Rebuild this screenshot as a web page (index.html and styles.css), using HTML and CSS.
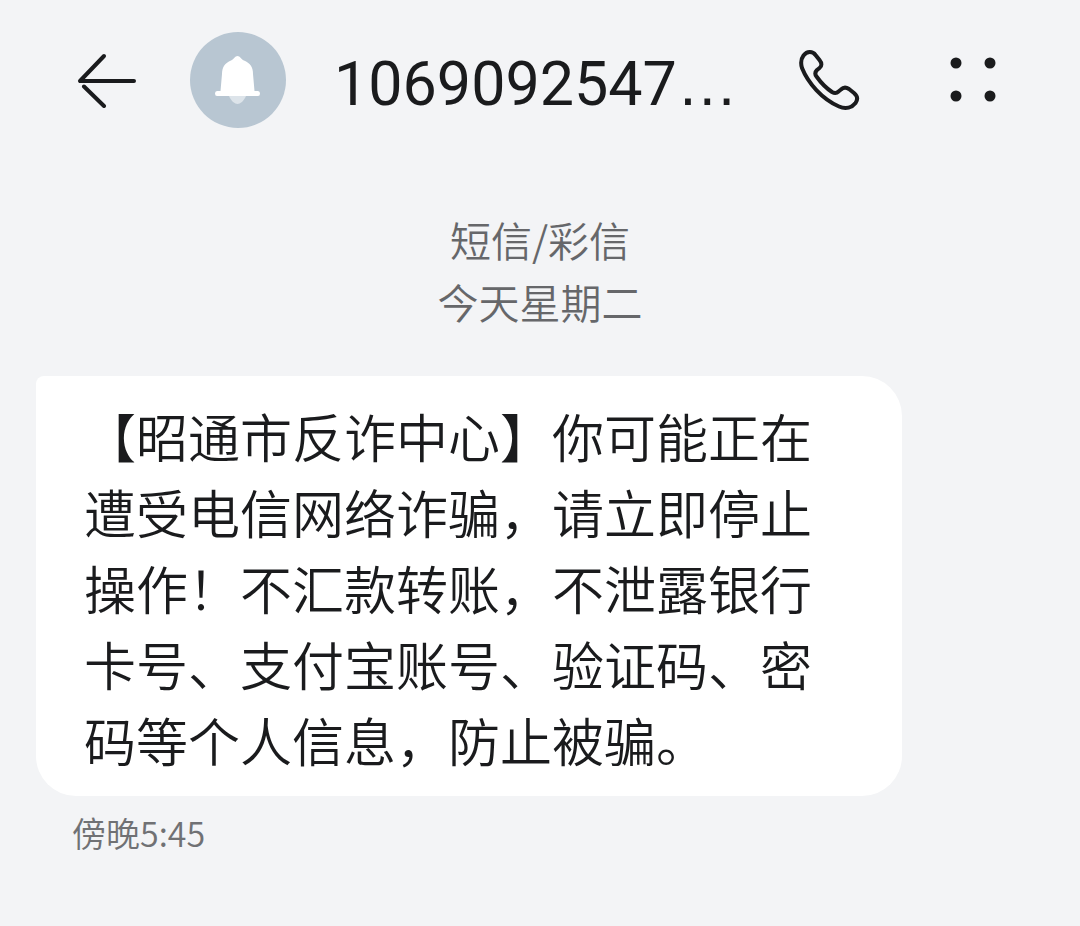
FILE: index.html
```html
<!DOCTYPE html>
<html lang="zh-Hans">
<head>
  <meta charset="UTF-8" />
  <meta name="viewport" content="width=device-width, initial-scale=1.0"/>
  <title>短信</title>
  <link rel="stylesheet" href="styles.css">
</head>
<body>
  <header class="topbar">
    <button type="button" class="icon-btn back" aria-label="返回">
      <svg width="60" height="56" viewBox="0 0 60 56">
        <path d="M28 4 L4 29 H58" />
        <path class="tail" d="M8 34.500 L28 54" />
      </svg>
    </button>

    <div class="avatar">
      <svg width="96" height="96" viewBox="0 0 96 96">
        <path class="clapper" d="M39 64 H56 C54 69 50 72 47.500 72 C45 72 41 69 39 64 Z" />
        <path class="bell" d="M47.500 24 C50 24 51 27 54 28.500 C60 31 63 35 63 42 L64.500 59 H68 Q70 59 70 61.500 Q70 64 68 64 H27 Q25 64 25 61.500 Q25 59 27 59 H30.500 L32 42 C32 35 35 31 41 28.500 C44 27 45 24 47.500 24 Z" />
      </svg>
    </div>

    <h1 class="number">1069092547<span class="more">…</span></h1>

    <button type="button" class="icon-btn call" aria-label="拨打电话">
      <svg width="62" height="62" viewBox="0 0 62 62">
        <path d="M5.500 6.500 C9 2 14.500 2 17.500 6 L21.500 11 C24 14 24 17 21.500 19 L19 21 C17 23 17 25.500 18.500 27.500 C23.500 34.500 28 39 34 43 C36.500 44.500 38.500 44.500 40.500 42.500 L43 40.500 C45.500 38 48 38 51 40 L56 44 C59.500 47 60 50.500 57.500 54 C54 58.500 48 60.500 41 57.500 C24 50 10 34 4 19 C2.500 14 2.500 10.500 5.500 6.500 Z" />
      </svg>
    </button>

    <button type="button" class="icon-btn menu" aria-label="更多">
      <svg width="46" height="46" viewBox="0 0 46 46">
        <circle cx="6" cy="6" r="5.500" />
        <circle cx="40" cy="6" r="5.500" />
        <circle cx="6" cy="39" r="5.500" />
        <circle cx="40" cy="39" r="5.500" />
      </svg>
    </button>
  </header>

  <main class="thread">
    <div class="meta">
      <p>短信/彩信</p>
      <p>今天星期二</p>
    </div>

    <div class="message">
      <p class="bubble">【昭通市反诈中心】你可能正在遭受电信网络诈骗，请立即停止操作！不汇款转账，不泄露银行卡号、支付宝账号、验证码、密码等个人信息，防止被骗。</p>
      <time class="time" datetime="17:45">傍晚5:45</time>
    </div>
  </main>
</body>
</html>
```
FILE: styles.css
```css
* {
  box-sizing: border-box;
}
body {
  margin: 0;
  background: #f3f4f6;
  color: #1a1b1d;
  font-family: "Noto Sans CJK SC", sans-serif;
  font-weight: 350;
}
h1, p {
  margin: 0;
  font-weight: inherit;
}
svg {
  display: block;
  fill: none;
}
.topbar {
  display: flex;
  align-items: center;
  height: 160px;
  padding: 0 84px 0 76px;
}
.icon-btn {
  flex: none;
  padding: 0;
  border: none;
  background: none;
  color: inherit;
  cursor: pointer;
}
.back svg, .call svg {
  stroke: currentColor;
  stroke-width: 4;
  stroke-linecap: round;
  stroke-linejoin: round;
}
.menu {
  margin-left: 90px;
}
.menu svg {
  fill: currentColor;
}
.avatar {
  flex: none;
  margin-left: 54px;
  border-radius: 50%;
  background: #b8c6d2;
}
.bell {
  fill: #fff;
}
.clapper {
  fill: #dde4ea;
}
.number {
  flex: 1;
  margin-left: 48px;
  padding-top: 8px;
  font-family: Roboto, sans-serif;
  font-size: 61px;
  font-weight: 400;
  line-height: 80px;
  white-space: nowrap;
}
.more {
  font-family: "Liberation Sans", sans-serif;
}
.thread {
  padding: 48px 36px;
}
.meta {
  color: #66676a;
  font-size: 41px;
  line-height: 62px;
  text-align: center;
}
.message {
  max-width: 866px;
  margin-top: 44px;
}
.bubble {
  padding: 22px 48px 18px;
  border-radius: 8px 40px 40px 40px;
  background: #fff;
  font-size: 52px;
  line-height: 76px;
}
.time {
  display: block;
  padding: 12px 36px;
  color: #707174;
  font-size: 34px;
  line-height: 50px;
}
```
